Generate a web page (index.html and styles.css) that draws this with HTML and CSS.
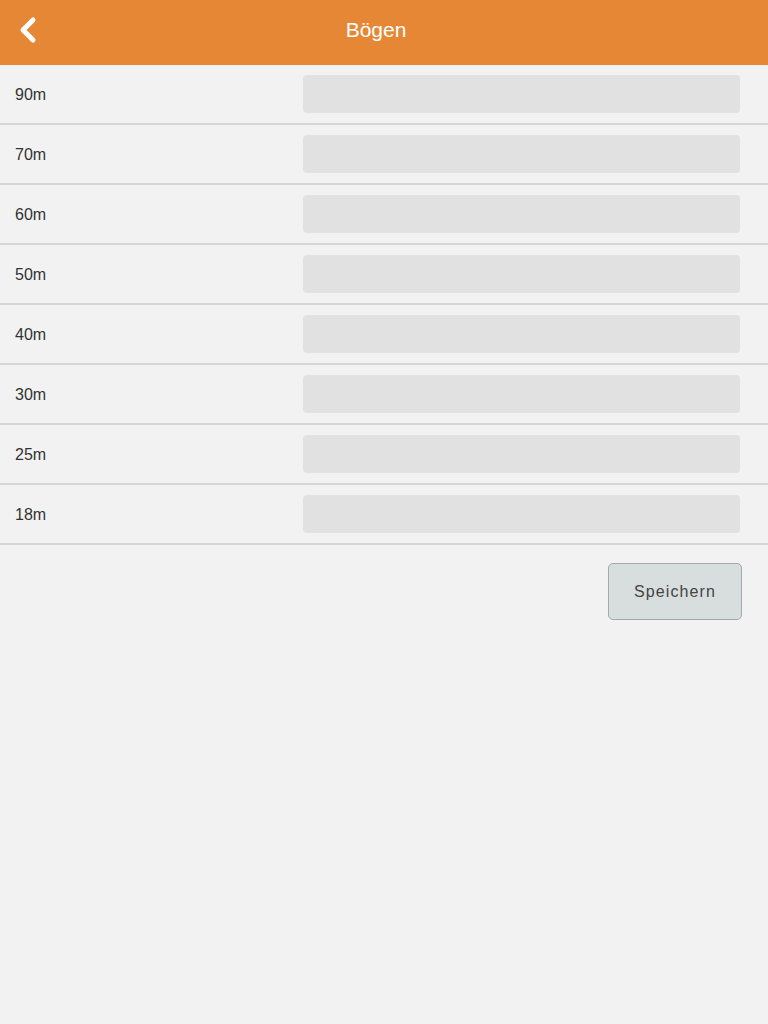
FILE: index.html
```html
<!DOCTYPE html>
<html lang="de">
<head>
<meta charset="utf-8">
<title>Bögen</title>
<link rel="stylesheet" href="styles.css">
</head>
<body>
<header class="topbar">
  <a class="back" href="#" aria-label="Zurück">
    <svg width="20" height="28" viewBox="0 0 20 28"><path d="M15 4 L5 14 L15 24" fill="none" stroke="#fff" stroke-width="5" stroke-linecap="round" stroke-linejoin="round"/></svg>
  </a>
  <h1 class="title">Bögen</h1>
</header>
<main>
  <ul class="list">
    <li class="row"><span class="label">90m</span><input class="field" type="text"></li>
    <li class="row"><span class="label">70m</span><input class="field" type="text"></li>
    <li class="row"><span class="label">60m</span><input class="field" type="text"></li>
    <li class="row"><span class="label">50m</span><input class="field" type="text"></li>
    <li class="row"><span class="label">40m</span><input class="field" type="text"></li>
    <li class="row"><span class="label">30m</span><input class="field" type="text"></li>
    <li class="row"><span class="label">25m</span><input class="field" type="text"></li>
    <li class="row"><span class="label">18m</span><input class="field" type="text"></li>
  </ul>
  <div class="actions">
    <button class="save" type="button">Speichern</button>
  </div>
</main>
</body>
</html>
```
FILE: styles.css
```css
html, body {
  margin: 0;
  padding: 0;
  background: #f2f2f2;
  font-family: "Liberation Sans", Arial, Helvetica, sans-serif;
}
.topbar {
  height: 65px;
  background: #e68736;
  display: flex;
  align-items: center;
  justify-content: center;
  position: relative;
}
.back {
  position: absolute;
  left: 18px;
  top: 16px;
  display: block;
  width: 20px;
  height: 28px;
}
.back svg { display: block; }
.title {
  margin: 0 0 5px -16px;
  font-size: 21px;
  font-weight: normal;
  color: #fff;
}
.list {
  list-style: none;
  margin: 0;
  padding: 0;
}
.row {
  height: 58px;
  border-bottom: 2px solid #d6d6d6;
  display: flex;
  align-items: center;
  padding: 0 28px 0 15px;
}
.label {
  flex: 0 0 288px;
  font-size: 16px;
  color: #333;
  padding-top: 1px;
}
.field {
  flex: 1;
  height: 38px;
  box-sizing: border-box;
  border: none;
  border-radius: 4px;
  background: #e1e1e1;
  margin: 0;
  padding: 0 8px;
  outline: none;
}
.actions {
  display: flex;
  justify-content: flex-end;
  padding: 18px 26px 0 0;
}
.save {
  width: 134px;
  height: 57px;
  border: 1px solid #a3aaa9;
  border-radius: 5px;
  background: #d8dddd;
  color: #444;
  font-family: "Liberation Sans", Arial, sans-serif;
  font-size: 16px;
  letter-spacing: 1.1px;
  padding: 0;
}
```
